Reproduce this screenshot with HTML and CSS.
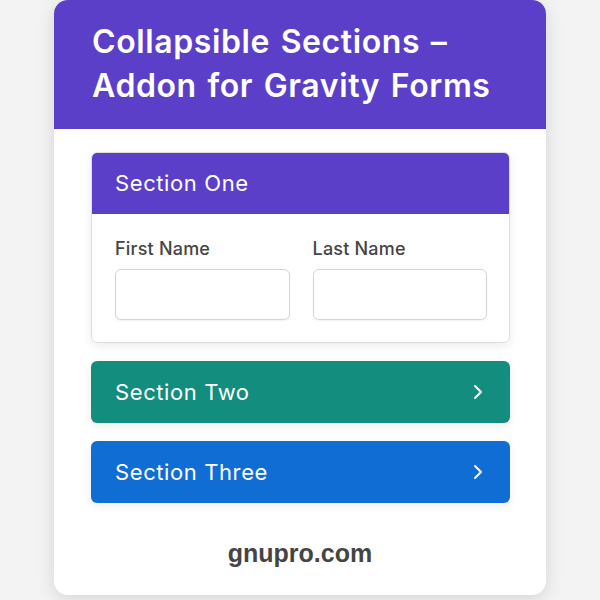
FILE: index.html
```html
<!DOCTYPE html>
<html lang="en">
<head>
    <meta charset="UTF-8">
    <meta name="viewport" content="width=device-width, initial-scale=1.0">
    <title>Collapsible Sections - Addon for Gravity Forms</title>
    <link rel="stylesheet" href="styles.css">
</head>
<body>
    <div class="card">
        <header class="card-header">
            <h1>Collapsible Sections –<br>Addon for Gravity Forms</h1>
        </header>

        <div class="card-body">
            <!-- open section -->
            <div class="section open">
                <div class="section-title purple">Section One</div>
                <div class="section-content">
                    <div class="field">
                        <label for="first">First Name</label>
                        <input type="text" id="first">
                    </div>
                    <div class="field">
                        <label for="last">Last Name</label>
                        <input type="text" id="last">
                    </div>
                </div>
            </div>

            <!-- closed sections -->
            <div class="section">
                <div class="section-title teal">
                    <span>Section Two</span>
                    <svg class="chevron" width="12" height="16" viewBox="0 0 12 16"><path d="M3 2l6 6-6 6"/></svg>
                </div>
            </div>
            <div class="section">
                <div class="section-title blue">
                    <span>Section Three</span>
                    <svg class="chevron" width="12" height="16" viewBox="0 0 12 16"><path d="M3 2l6 6-6 6"/></svg>
                </div>
            </div>
        </div>

        <footer class="card-footer">gnupro.com</footer>
    </div>
</body>
</html>
```

FILE: styles.css
```css
* {
    margin: 0;
    padding: 0;
    box-sizing: border-box;
    font-family: Inter, 'Noto Sans', sans-serif;
}

body {
    background: #f3f3f3;
    width: 600px;
    height: 600px;
    overflow: hidden;
}

.card {
    margin-left: 54px;
    width: 492px;
    height: 595px;
    background: #fff;
    border-radius: 14px;
    overflow: hidden;
    box-shadow: 0 4px 18px rgba(0, 0, 0, 0.12);
    display: flex;
    flex-direction: column;
}

.card-header {
    background: #5b3fc9;
    height: 129px;
    padding: 20px 20px 0 38px;
}

.card-header h1 {
    color: #fff;
    font-size: 32px;
    font-weight: 600;
    line-height: 44px;
    letter-spacing: 0.6px;
    word-spacing: 2px;
}

.card-body {
    padding: 23px 36px 0 37px;
    display: flex;
    flex-direction: column;
    gap: 18px;
}

.section {
    border-radius: 6px;
    box-shadow: 0 3px 10px rgba(0, 0, 0, 0.08);
}

.section.open {
    border: 1px solid #dedede;
    overflow: hidden;
}

.section-title {
    height: 62px;
    padding: 0 26px 0 24px;
    display: flex;
    align-items: center;
    justify-content: space-between;
    color: #fff;
    font-size: 22px;
    font-weight: 400;
    letter-spacing: 0.6px;
    border-radius: 6px;
}

.section.open .section-title {
    border-radius: 0;
    margin: -1px -1px 0;
}

.purple { background: #5b3fc9; }
.teal { background: #138d7e; }
.blue { background: #0f6dd4; }

.chevron path {
    fill: none;
    stroke: #fff;
    stroke-width: 2;
    stroke-linecap: round;
    stroke-linejoin: round;
}

.section-content {
    display: flex;
    gap: 23px;
    padding: 24px 22px 22px 23px;
}

.field {
    flex: 1;
    min-width: 0;
    display: flex;
    flex-direction: column;
    gap: 9px;
}

.field label {
    font-size: 18px;
    font-weight: 500;
    color: #444;
    line-height: 22px;
    letter-spacing: 0.2px;
}

.field input {
    width: 100%;
    height: 51px;
    border: 1px solid #d4d4d4;
    border-radius: 6px;
    background: #fff;
    box-shadow: 0 1px 2px rgba(0, 0, 0, 0.06);
}

.card-footer {
    margin-top: auto;
    padding-bottom: 27px;
    text-align: center;
    font-size: 25px;
    font-weight: 700;
    color: #444;
    font-family: 'Liberation Sans', Arial, sans-serif;
}
```
